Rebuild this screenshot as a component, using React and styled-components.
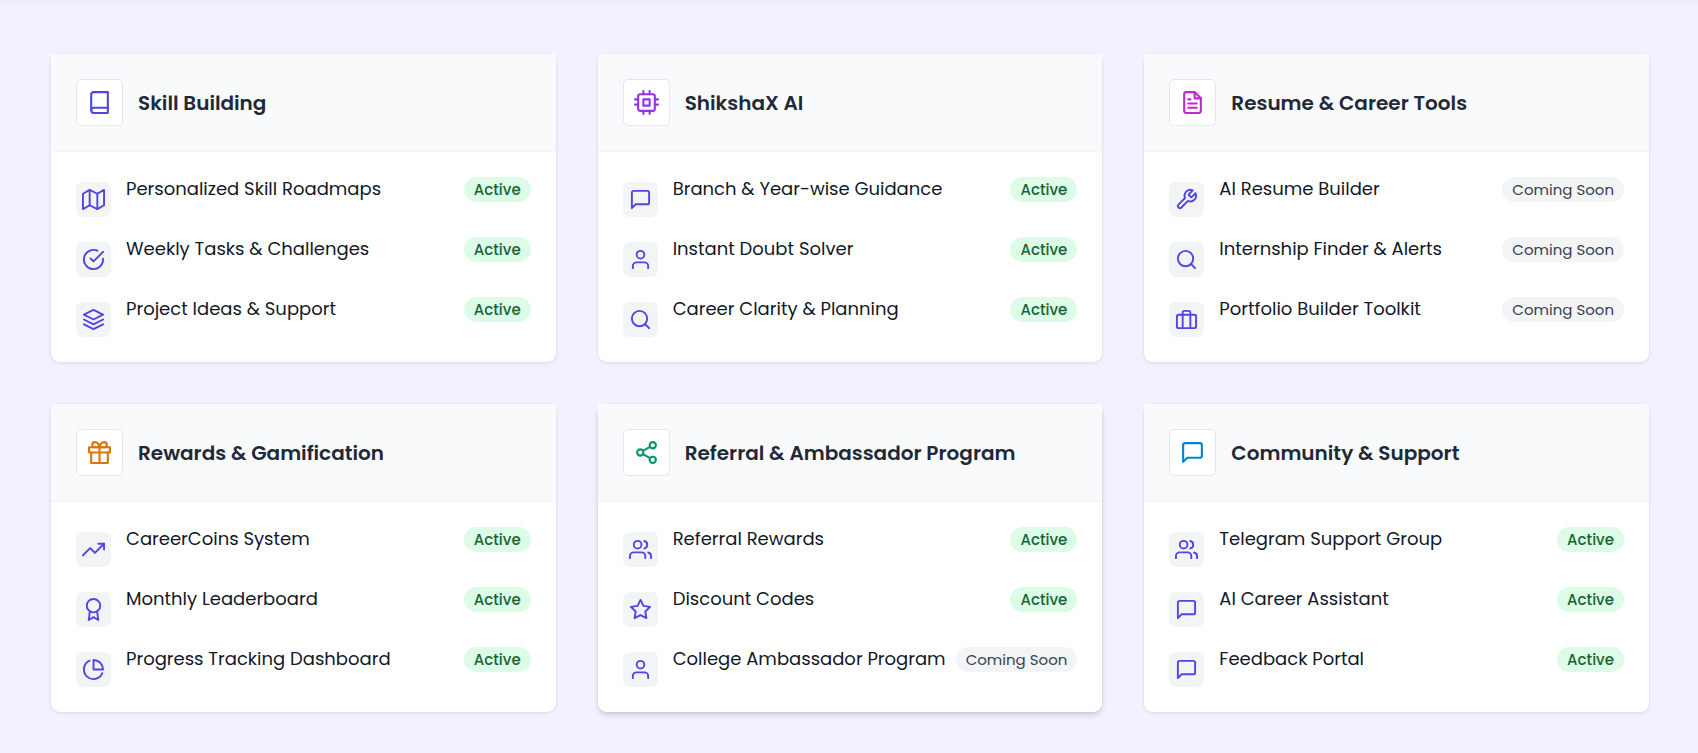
import React from "react";
import styled, { createGlobalStyle } from "styled-components";
import {
  FiAward, FiBook, FiBriefcase, FiCheckCircle, FiCpu, FiFileText, FiGift, FiLayers, FiMap,
  FiMessageSquare, FiPieChart, FiSearch, FiShare2, FiStar, FiTool, FiTrendingUp, FiUser, FiUsers,
} from "react-icons/fi";

const GlobalStyle = createGlobalStyle`
  *, *::before, *::after { box-sizing: border-box; }
  body {
    margin: 0;
    background: #f4f0ff;
    font-family: Poppins, "Open Sans", "Noto Sans", sans-serif;
    color: #1f2937;
  }
`;

const Page = styled.main`
  min-height: 100vh;
  padding: 53px 48px 40px 50px;
  background: #f4f0ff;
  box-shadow: inset 0 12px 12px -12px rgba(0, 0, 0, 0.06);
`;

const Grid = styled.div`
  display: grid;
  grid-template-columns: repeat(auto-fit, minmax(420px, 1fr));
  gap: 40px;
`;

const Card = styled.section`
  border: 1px solid rgba(0, 0, 0, 0.02);
  border-radius: 10px;
  background: #fff;
  background-clip: padding-box;
  box-shadow: ${({ $raised }) =>
    $raised
      ? "0 4px 6px -1px rgba(0, 0, 0, 0.1), 0 2px 4px -1px rgba(0, 0, 0, 0.06)"
      : "0 1px 3px rgba(0, 0, 0, 0.06)"};
`;

const CardHeader = styled.header`
  display: flex;
  align-items: center;
  gap: 15px;
  padding: 25px;
  border-bottom: 1px solid #f3f4f6;
  background: #f9fafb;
`;

const HeaderIcon = styled.span`
  display: grid;
  place-items: center;
  flex: none;
  width: 47px;
  height: 47px;
  border: 1px solid #e5e7eb;
  border-radius: 5px;
  background: #fff;
  color: ${({ $color }) => $color};
  font-size: 25px;
`;

const Title = styled.h3`
  margin: 0;
  font-size: 20px;
  font-weight: 600;
  line-height: 30px;
`;

const List = styled.ul`
  display: flex;
  flex-direction: column;
  gap: 20px;
  margin: 0;
  padding: 25px;
  list-style: none;
`;

const Item = styled.li`
  display: flex;
  align-items: flex-start;
  gap: 15px;
`;

const ItemIcon = styled.span`
  display: grid;
  place-items: center;
  flex: none;
  width: 35px;
  height: 35px;
  margin-top: 5px;
  border-radius: 7px;
  background: #f3f4f6;
  color: #4f46e5;
  font-size: 23px;
`;

const Label = styled.span`
  flex: 1;
  min-width: 0;
  color: #111827;
  font-size: 18px;
  line-height: 23px;
  white-space: nowrap;
`;

const Badge = styled.span`
  flex: none;
  padding: 0 10px;
  border-radius: 13px;
  background: ${({ $active }) => ($active ? "#dcfce7" : "#f3f4f6")};
  color: ${({ $active }) => ($active ? "#166534" : "#374151")};
  font-size: 15px;
  font-weight: ${({ $active }) => ($active ? 500 : 400)};
  line-height: 25px;
`;

const sections = [
  {
    title: "Skill Building", icon: FiBook, color: "#4f46e5",
    items: [
      ["Personalized Skill Roadmaps", FiMap, true],
      ["Weekly Tasks & Challenges", FiCheckCircle, true],
      ["Project Ideas & Support", FiLayers, true],
    ],
  },
  {
    title: "ShikshaX AI", icon: FiCpu, color: "#9333ea",
    items: [
      ["Branch & Year-wise Guidance", FiMessageSquare, true],
      ["Instant Doubt Solver", FiUser, true],
      ["Career Clarity & Planning", FiSearch, true],
    ],
  },
  {
    title: "Resume & Career Tools", icon: FiFileText, color: "#c026d3",
    items: [
      ["AI Resume Builder", FiTool, false],
      ["Internship Finder & Alerts", FiSearch, false],
      ["Portfolio Builder Toolkit", FiBriefcase, false],
    ],
  },
  {
    title: "Rewards & Gamification", icon: FiGift, color: "#d97706",
    items: [
      ["CareerCoins System", FiTrendingUp, true],
      ["Monthly Leaderboard", FiAward, true],
      ["Progress Tracking Dashboard", FiPieChart, true],
    ],
  },
  {
    title: "Referral & Ambassador Program", icon: FiShare2, color: "#059669", raised: true,
    items: [
      ["Referral Rewards", FiUsers, true],
      ["Discount Codes", FiStar, true],
      ["College Ambassador Program", FiUser, false],
    ],
  },
  {
    title: "Community & Support", icon: FiMessageSquare, color: "#0284c7",
    items: [
      ["Telegram Support Group", FiUsers, true],
      ["AI Career Assistant", FiMessageSquare, true],
      ["Feedback Portal", FiMessageSquare, true],
    ],
  },
];

function FeatureCard({ title, icon: Icon, color, raised, items }) {
  return (
    <Card $raised={raised}>
      <CardHeader>
        <HeaderIcon $color={color}><Icon aria-hidden="true" /></HeaderIcon>
        <Title>{title}</Title>
      </CardHeader>
      <List>
        {items.map(([label, ItemGlyph, active]) => (
          <Item key={label}>
            <ItemIcon><ItemGlyph aria-hidden="true" /></ItemIcon>
            <Label>{label}</Label>
            <Badge $active={active}>{active ? "Active" : "Coming Soon"}</Badge>
          </Item>
        ))}
      </List>
    </Card>
  );
}

export default function App() {
  return (
    <>
      <GlobalStyle />
      <Page>
        <Grid>
          {sections.map((section) => (
            <FeatureCard key={section.title} {...section} />
          ))}
        </Grid>
      </Page>
    </>
  );
}
